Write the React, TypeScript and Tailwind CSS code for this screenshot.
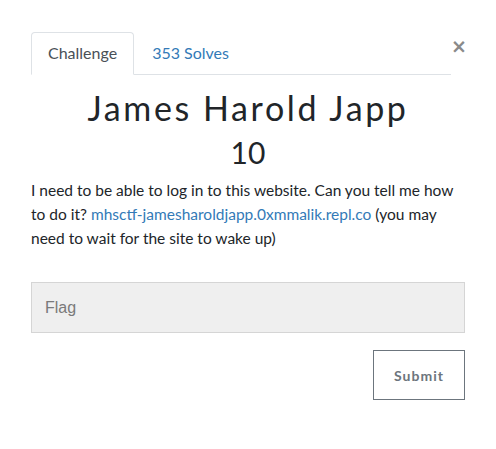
import { useState } from "react";

const App = () => {
  const [flag, setFlag] = useState("");

  return (
    <div className="w-[496px] h-[449px] bg-white font-['Lato',sans-serif] text-[#212529]">
      <div className="px-[31px] pt-[32px]">
        <div className="flex items-start">
          <ul className="flex flex-1 border-b border-[#dee2e6]">
            <li className="-mb-px px-4 py-2 text-base leading-6 text-[#495057] bg-white border border-[#dee2e6] border-b-white rounded-t">
              Challenge
            </li>
            <li className="px-4 py-2 ml-px text-base leading-6 text-[#337ab7] border border-transparent">
              353 Solves
            </li>
          </ul>
          <button className="w-[14px] mt-[2px] text-[19px] leading-6 font-bold text-[#8a8a8a] font-['DejaVu_Sans',sans-serif]">
            ×
          </button>
        </div>

        <h2 className="mt-[13px] text-center text-[34px] leading-[40px] tracking-[2.6px]">
          James Harold Japp
        </h2>
        <h3 className="mt-[6px] text-center text-[30px] leading-[36px]">10</h3>
        <p className="mt-[8px] text-[15.5px] leading-6">
          I need to be able to log in to this website. Can you tell me how to do it?{" "}
          <a className="text-[#337ab7]" href="#">
            mhsctf-jamesharoldjapp.0xmmalik.repl.co
          </a>{" "}
          (you may need to wait for the site to wake up)
        </p>

        <input
          value={flag}
          onChange={(e) => setFlag(e.target.value)}
          placeholder="Flag"
          className="mt-[32px] w-full h-[51px] px-[13px] bg-[#efefef] border border-[#d5d5d5] text-base font-['Liberation_Sans',sans-serif] placeholder:text-[#7a7a7a] outline-none"
        />
        <div className="flex justify-end mt-[17px]">
          <button className="w-[92px] h-[50px] border border-[#6c757d] text-[14px] font-bold tracking-[1px] text-[#6c757d]">
            Submit
          </button>
        </div>
      </div>
    </div>
  );
};

export default App;
